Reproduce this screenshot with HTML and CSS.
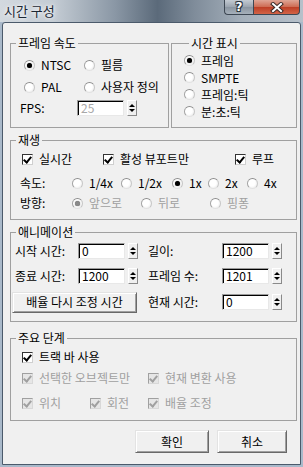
FILE: index.html
```html
<!DOCTYPE html>
<html>
<head>
  <title>시간 구성</title>
  <link rel="stylesheet" href="styles.css">
</head>
<body>
  <div class="window">
    <div class="titlebar">
      <span class="title">시간 구성</span>
      <div class="caption">
        <span class="cap-btn help">?</span>
        <span class="cap-btn close">
          <svg width="14" height="11" viewBox="0 0 14 11">
            <path d="M3 2 L11 9 M11 2 L3 9" stroke="#3a2a28" stroke-width="4" stroke-linecap="square"/>
            <path d="M3 2 L11 9 M11 2 L3 9" stroke="#fff" stroke-width="2" stroke-linecap="square"/>
          </svg>
        </span>
      </div>
    </div>

    <div class="client">
      <div class="top-row">
        <fieldset class="group rate">
          <legend>프레임 속도</legend>
          <div class="row r22 pad13">
            <label class="opt w60"><span class="radio on"></span>NTSC</label>
            <label class="opt"><span class="radio"></span>필름</label>
          </div>
          <div class="row r22 pad13">
            <label class="opt w60"><span class="radio"></span>PAL</label>
            <label class="opt"><span class="radio"></span>사용자 정의</label>
          </div>
          <div class="row r20 pad9">
            <span class="lbl w57">FPS:</span>
            <span class="field off">25</span>
            <span class="spin"><i class="up"></i><i class="down"></i></span>
          </div>
        </fieldset>

        <fieldset class="group display">
          <legend>시간 표시</legend>
          <label class="opt r17"><span class="radio on"></span>프레임</label>
          <label class="opt r17"><span class="radio"></span>SMPTE</label>
          <label class="opt r17"><span class="radio"></span>프레임:틱</label>
          <label class="opt r17"><span class="radio"></span>분:초:틱</label>
        </fieldset>
      </div>

      <fieldset class="group playback">
        <legend>재생</legend>
        <div class="row r22 pad11">
          <label class="opt w81"><span class="check on"></span>실시간</label>
          <label class="opt w132"><span class="check on"></span>활성 뷰포트만</label>
          <label class="opt"><span class="check on"></span>루프</label>
        </div>
        <div class="row r20 pad9 gap3">
          <span class="lbl w52">속도:</span>
          <label class="opt w49"><span class="radio"></span>1/4x</label>
          <label class="opt w51"><span class="radio"></span>1/2x</label>
          <label class="opt w36"><span class="radio on"></span>1x</label>
          <label class="opt w39"><span class="radio"></span>2x</label>
          <label class="opt"><span class="radio"></span>4x</label>
        </div>
        <div class="row r20 pad9">
          <span class="lbl w52">방향:</span>
          <label class="opt w69 off"><span class="radio on"></span>앞으로</label>
          <label class="opt w69 off"><span class="radio"></span>뒤로</label>
          <label class="opt off"><span class="radio"></span>핑퐁</label>
        </div>
      </fieldset>

      <fieldset class="group animation">
        <legend>애니메이션</legend>
        <div class="row r20 pad4">
          <span class="lbl w63">시작 시간:</span>
          <span class="field">0</span>
          <span class="spin"><i class="up"></i><i class="down"></i></span>
          <span class="lbl w74 ml10">길이:</span>
          <span class="field">1200</span>
          <span class="spin"><i class="up"></i><i class="down"></i></span>
        </div>
        <div class="row r20 pad4 gap5">
          <span class="lbl w63">종료 시간:</span>
          <span class="field">1200</span>
          <span class="spin"><i class="up"></i><i class="down"></i></span>
          <span class="lbl w74 ml10">프레임 수:</span>
          <span class="field">1201</span>
          <span class="spin"><i class="up"></i><i class="down"></i></span>
        </div>
        <div class="row r22 pad1 gap5">
          <button class="btn rescale">배율 다시 조정 시간</button>
          <span class="lbl w74 ml11">현재 시간:</span>
          <span class="field">0</span>
          <span class="spin"><i class="up"></i><i class="down"></i></span>
        </div>
      </fieldset>

      <fieldset class="group keys">
        <legend>주요 단계</legend>
        <div class="row r20 pad11">
          <label class="opt"><span class="check on"></span>트랙 바 사용</label>
        </div>
        <div class="row r20 pad11 gap1">
          <label class="opt w126 off"><span class="check on"></span>선택한 오브젝트만</label>
          <label class="opt off"><span class="check on"></span>현재 변환 사용</label>
        </div>
        <div class="row r20 pad11 gap5">
          <label class="opt w68 off"><span class="check on"></span>위치</label>
          <label class="opt w58 off"><span class="check on"></span>회전</label>
          <label class="opt off"><span class="check on"></span>배율 조정</label>
        </div>
      </fieldset>

      <div class="actions">
        <button class="btn ok">확인</button>
        <button class="btn cancel">취소</button>
      </div>
    </div>
  </div>
</body>
</html>
```

FILE: styles.css
```css
body {
  margin: 0;
}

.window {
  width: 303px;
  height: 467px;
  box-sizing: border-box;
  padding: 0 2px 2px 2px;
  display: flex;
  flex-direction: column;
  background: #a9b9ca;
  font-family: "Noto Sans CJK KR", sans-serif;
  font-size: 12px;
  line-height: 14px;
  color: #000;
}

/* title bar */
.titlebar {
  height: 22px;
  margin: 0 -2px;
  display: flex;
  justify-content: space-between;
  background: linear-gradient(90deg, #d3d9df 0, #c3cbd3 18%, #8a97a5 38%, #5b6a7a 52%, #7f8c9a 64%, #a4afba 80%, #b6c0ca 100%);
}

.title {
  padding-left: 4px;
  line-height: 22px;
  font-size: 13px;
  color: #1c2733;
  text-shadow: 0 0 6px #fff, 0 0 3px #fff;
}

.caption {
  display: flex;
  margin-right: 3px;
}

.cap-btn {
  height: 15px;
  box-sizing: border-box;
  border: 1px solid #3d4753;
  border-top: none;
  display: flex;
  align-items: center;
  justify-content: center;
}

.help {
  width: 29px;
  border-radius: 0 0 0 4px;
  border-right: none;
  background: linear-gradient(#c3cad2, #9aa4af 50%, #8994a0 51%, #a6b0ba);
  font-family: "DejaVu Sans", sans-serif;
  font-weight: bold;
  font-size: 12px;
  color: #fff;
  text-shadow: 0 0 1px #2a323c, 1px 1px 0 #2a323c, -1px -1px 0 #2a323c, 1px -1px 0 #2a323c, -1px 1px 0 #2a323c;
}

.close {
  width: 47px;
  border-radius: 0 0 4px 0;
  background: linear-gradient(#dfa595, #cd6a52 50%, #bd3e25 51%, #d26447);
}

/* client area */
.client {
  flex: 1;
  border: 1px solid #4b5a6b;
  border-radius: 3px 3px 0 0;
  background: #f0f0f0;
  padding: 13px 3px 0 7px;
  display: flex;
  flex-direction: column;
}

.top-row {
  display: flex;
  gap: 2px;
}

.group {
  margin: 0;
  padding: 0;
  min-width: 0;
  border: 1px solid #a0a0a0;
}

.group legend {
  margin-left: 5px;
  padding: 0 2px;
  height: 14px;
  line-height: 14px;
}

.rate {
  width: 159px;
  box-sizing: border-box;
  padding: 4px 0 9px 0;
}

.display {
  width: 126px;
  box-sizing: border-box;
  padding: 2px 0 7px 12px;
}

.playback {
  margin-top: 5px;
  padding: 1px 0 6px 0;
}

.animation {
  margin-top: 5px;
  padding: 2px 0 8px 0;
}

.keys {
  margin-top: 9px;
  padding: 2px 0 7px 0;
}

/* rows */
.row {
  display: flex;
  align-items: center;
}

.r17 { height: 17px; }
.r20 { height: 20px; }
.r22 { height: 22px; }

.pad1 { padding-left: 1px; }
.pad4 { padding-left: 4px; }
.pad9 { padding-left: 9px; }
.pad11 { padding-left: 11px; }
.pad13 { padding-left: 13px; }

.gap1 { margin-top: 1px; }
.gap3 { margin-top: 3px; }
.gap5 { margin-top: 5px; }

.ml10 { margin-left: 10px; }
.ml11 { margin-left: 11px; }

.w36 { width: 36px; }
.w39 { width: 39px; }
.w49 { width: 49px; }
.w51 { width: 51px; }
.w52 { width: 52px; }
.w57 { width: 57px; }
.w58 { width: 58px; }
.w60 { width: 60px; }
.w63 { width: 63px; }
.w68 { width: 68px; }
.w69 { width: 69px; }
.w74 { width: 74px; }
.w81 { width: 81px; }
.w126 { width: 126px; }
.w132 { width: 132px; }

.opt {
  display: flex;
  align-items: center;
  flex: none;
  white-space: nowrap;
}

.lbl {
  flex: none;
  white-space: nowrap;
}

.off {
  color: #a0a0a0;
}

/* radio buttons */
.radio {
  width: 11px;
  height: 11px;
  box-sizing: border-box;
  margin-right: 6px;
  flex: none;
  border-radius: 50%;
  border: 1px solid;
  border-color: #8d8d8d #c6c6c6 #e2e2e2 #a4a4a4;
  background: radial-gradient(circle at 40% 40%, #fff 45%, #e4e4e4 100%);
  display: flex;
  align-items: center;
  justify-content: center;
}

.radio.on::after {
  content: "";
  width: 5px;
  height: 5px;
  border-radius: 50%;
  background: #000;
  box-shadow: 0 0 1px #555;
}

.off .radio.on::after {
  background: #8a8a8a;
}

/* check boxes */
.check {
  width: 11px;
  height: 11px;
  box-sizing: border-box;
  margin-right: 6px;
  flex: none;
  border: 1px solid;
  border-color: #333 #cfcfcf #cfcfcf #333;
  background: #fff;
  position: relative;
}

.check.on::after {
  content: "";
  position: absolute;
  left: 2px;
  top: 0px;
  width: 3px;
  height: 6px;
  border: solid #000;
  border-width: 0 2px 2px 0;
  transform: rotate(40deg);
}

.off .check {
  border-color: #a0a0a0 #d8d8d8 #d8d8d8 #a0a0a0;
  background: #e6e6e6;
}

.off .check.on::after {
  border-color: #a0a0a0;
}

/* spinner fields */
.field {
  width: 47px;
  height: 16px;
  box-sizing: border-box;
  flex: none;
  background: #fff;
  border: 1px solid;
  border-color: #9a9a9a #e8e8e8 #e8e8e8 #9a9a9a;
  box-shadow: inset 1px 1px #000;
  padding-left: 3px;
  line-height: 14px;
}

.field.off {
  color: #a8a8a8;
}

.spin {
  width: 10px;
  height: 16px;
  box-sizing: border-box;
  margin-left: 3px;
  flex: none;
  border: 1px solid;
  border-color: #fff #8a8a8a #8a8a8a #fff;
  background: #f0f0f0;
  display: flex;
  flex-direction: column;
  align-items: center;
  justify-content: space-evenly;
}

.spin i {
  width: 0;
  height: 0;
  border-left: 3px solid transparent;
  border-right: 3px solid transparent;
}

.spin .up {
  border-bottom: 3px solid #000;
}

.spin .down {
  border-top: 3px solid #000;
}

/* push buttons */
.btn {
  font: inherit;
  color: #000;
  height: 21px;
  padding: 0;
  background: #f0f0f0;
  border: 1px solid;
  border-color: #e3e3e3 #696969 #696969 #e3e3e3;
  box-shadow: inset 1px 1px #fff, inset -1px -1px #a0a0a0;
}

.rescale {
  width: 125px;
}

.actions {
  margin-top: 9px;
  margin-right: 10px;
  display: flex;
  justify-content: flex-end;
  gap: 8px;
}

.actions .btn {
  height: 23px;
}

.ok {
  width: 74px;
}

.cancel {
  width: 70px;
}
```
